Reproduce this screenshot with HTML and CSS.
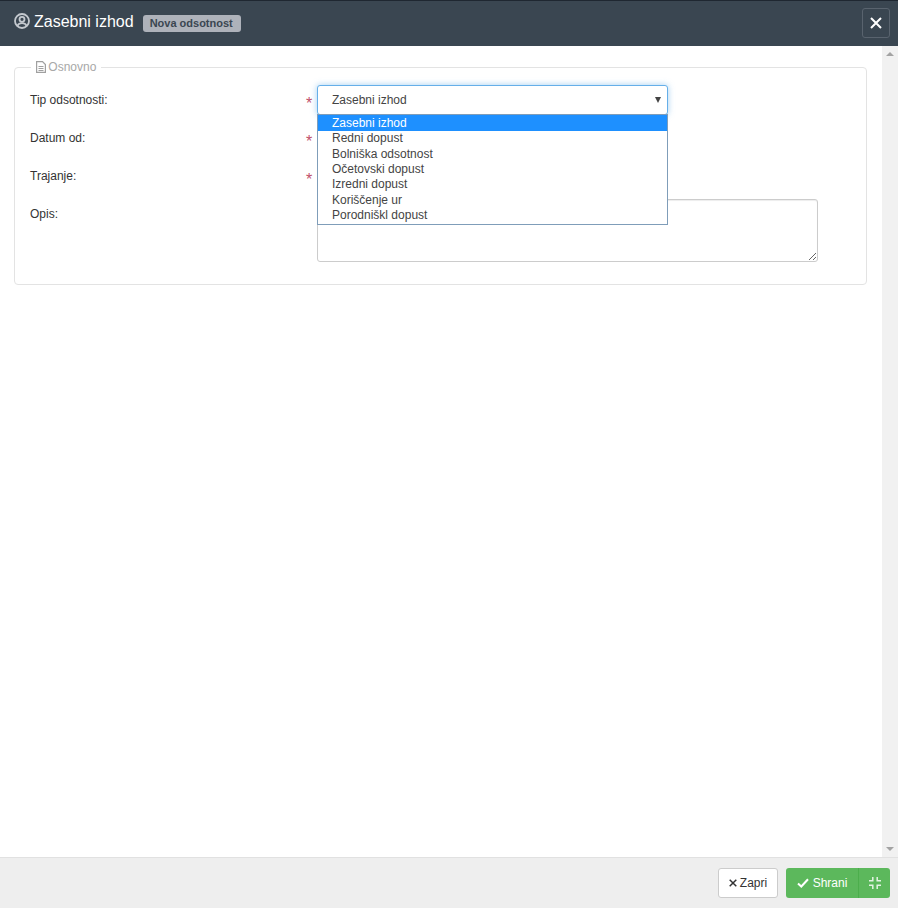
FILE: index.html
```html
<!DOCTYPE html>
<html lang="sl">
<head>
<meta charset="utf-8">
<title>Zasebni izhod</title>
<link rel="stylesheet" href="styles.css">
</head>
<body>
<div class="modal">
  <header class="head">
    <svg class="head-icon" viewBox="0 0 16 16" width="16" height="16" fill="none" stroke="#c4c9cf" stroke-width="1.8"><circle cx="8" cy="8" r="7"/><circle cx="8" cy="6.3" r="2.5"/><path d="M3.4 12.8c1-2 2.600-2.600 4.600-2.600s3.600.6 4.600 2.600"/></svg>
    <h1 class="title">Zasebni izhod</h1>
    <span class="badge">Nova odsotnost</span>
    <button class="close" type="button" aria-label="Zapri">
      <svg viewBox="0 0 12 12" width="12" height="12" stroke="#fff" stroke-width="2" fill="none"><path d="M1 1l10 10M11 1L1 11"/></svg>
    </button>
  </header>
  <div class="middle">
    <main class="content">
      <fieldset class="group">
        <legend class="legend">
          <svg viewBox="0 0 10 12" width="10" height="12" fill="none" stroke="#a0a0a0" stroke-width="1.200"><path d="M.6.600h5.900l2.900 3v7.800H.6zM2.500 5.500h5M2.500 7.500h5M2.500 9.500h5"/></svg>
          Osnovno
        </legend>
        <div class="row">
          <label class="label">Tip odsotnosti:</label>
          <span class="req">*</span>
          <div class="field">
            <div class="select">Zasebni izhod<span class="arrow"></span></div>
            <ul class="options">
              <li class="option active">Zasebni izhod</li>
              <li class="option">Redni dopust</li>
              <li class="option">Bolniška odsotnost</li>
              <li class="option">Očetovski dopust</li>
              <li class="option">Izredni dopust</li>
              <li class="option">Koriščenje ur</li>
              <li class="option">Porodniškl dopust</li>
            </ul>
          </div>
        </div>
        <div class="row">
          <label class="label">Datum od:</label>
          <span class="req">*</span>
          <div class="field"></div>
        </div>
        <div class="row">
          <label class="label">Trajanje:</label>
          <span class="req">*</span>
          <div class="field"></div>
        </div>
        <div class="row row-last">
          <label class="label">Opis:</label>
          <span class="req"></span>
          <textarea class="area"></textarea>
        </div>
      </fieldset>
    </main>
    <div class="scrollbar">
      <span class="sb-up"></span>
      <span class="sb-down"></span>
    </div>
  </div>
  <footer class="foot">
    <button class="btn btn-close" type="button">
      <svg viewBox="0 0 8 8" width="8" height="8" stroke="#333" stroke-width="1.500" fill="none"><path d="M.7.700l6.600 6.600M7.300.700L.7 7.300"/></svg>
      Zapri
    </button>
    <div class="save-group">
      <button class="btn btn-save" type="button">
        <svg viewBox="0 0 12 10" width="12" height="10" stroke="#fff" stroke-width="2" fill="none"><path d="M1 5.500l3.300 3L11 1.200"/></svg>
        Shrani
      </button>
      <button class="btn btn-shrink" type="button" aria-label="Skrči">
        <svg viewBox="0 0 12 12" width="12" height="12" stroke="#e4f3e4" stroke-width="1.500" fill="none"><path d="M3.800 0v3.800H0M8.200 0v3.800H12M3.800 12V8.200H0M8.200 12V8.200H12"/></svg>
      </button>
    </div>
  </footer>
</div>
</body>
</html>
```

FILE: styles.css
```css
* { box-sizing: border-box; }
html, body { margin: 0; height: 100%; }
body {
  font-family: "Liberation Sans", Arial, sans-serif;
  font-size: 12px;
  color: #333;
  background: #fff;
}
.modal { display: flex; flex-direction: column; height: 908px; }

.head {
  flex: none;
  height: 46px;
  display: flex;
  align-items: center;
  padding: 0 8px 2px 14px;
  background: #3a4651;
  border-top: 1px solid #1f2731;
  color: #fff;
}
.head-icon { flex: none; margin: -3px 4px 0 0; }
.title { margin: 0 9px 0 0; font-size: 16px; font-weight: 400; line-height: 20px; position: relative; top: -1px; }
.badge {
  width: 98px;
  height: 17px;
  margin-top: 1px;
  padding: 0 7px;
  border-radius: 3px;
  background: #aeb2ba;
  color: #3a4651;
  font-size: 11px;
  font-weight: 700;
  line-height: 17px;
}
.close {
  margin-left: auto;
  width: 28px;
  height: 30px;
  padding: 0;
  display: flex;
  align-items: center;
  justify-content: center;
  background: transparent;
  border: 1px solid #59636e;
  border-radius: 3px;
}

.middle { flex: 1; display: flex; min-height: 0; }
.content { flex: 1; padding: 14px 15px 0 14px; }
.group {
  margin: 0;
  padding: 11px 15px 0;
  height: 225px;
  border: 1px solid #e3e3e3;
  border-radius: 4px;
}
.legend {
  margin-left: 1px;
  padding: 0 5px;
  color: #a8a8a8;
  font-size: 12px;
  line-height: 14px;
}
.legend svg { vertical-align: -2px; margin-right: -1px; }

.row { display: flex; height: 38px; }
.row-last { height: auto; margin-top: -8px; padding-top: 8px; }
.label { flex: none; width: 274px; padding-top: 8px; line-height: 14px; }
.req {
  flex: none;
  width: 13px;
  padding: 11px 0 0 2px;
  color: #c0506a;
  font-size: 16px;
  line-height: 16px;
}
.field { position: relative; width: 351px; }
.select {
  position: relative;
  height: 30px;
  padding: 0 14px;
  line-height: 29px;
  color: #444;
  background: #fff;
  border: 1px solid #66afe9;
  border-radius: 3px;
  box-shadow: 0 0 6px rgba(102, 175, 233, .6);
}
.arrow {
  position: absolute;
  right: 6px;
  top: 11px;
  border: 3.500px solid transparent;
  border-top: 6px solid #444;
  border-bottom: 0;
}
.options {
  position: absolute;
  z-index: 2;
  left: 0;
  top: 29px;
  width: 351px;
  margin: 0;
  padding: 0;
  list-style: none;
  background: #fff;
  border: 1px solid #7f9db9;
}
.option {
  height: 15.400px;
  padding-left: 14px;
  line-height: 14px;
  color: #444;
}
.option.active { height: 16.300px; line-height: 16px; background: #1e90ff; color: #fff; }
.area {
  display: block;
  width: 501px;
  height: 63px;
  margin: 0;
  border: 1px solid #ccc;
  border-radius: 3px;
  box-shadow: inset 0 1px 1px rgba(0, 0, 0, .075);
  background: #fff;
}

.scrollbar {
  flex: none;
  width: 16px;
  display: flex;
  flex-direction: column;
  justify-content: space-between;
  align-items: center;
  padding: 6px 0;
  background: #f1f1f1;
}
.sb-up { border: 4px solid transparent; border-top: 0; border-bottom: 4px solid #a3a3a3; }
.sb-down { border: 4px solid transparent; border-bottom: 0; border-top: 4px solid #a3a3a3; }

.foot {
  flex: none;
  height: 51px;
  display: flex;
  justify-content: flex-end;
  align-items: center;
  gap: 8px;
  padding: 0 8px 0 0;
  background: #eee;
  border-top: 1px solid #e1e1e1;
}
.btn {
  height: 30px;
  margin: 0;
  font: 12px/1 "Liberation Sans", Arial, sans-serif;
  border-radius: 3px;
  display: flex;
  align-items: center;
  justify-content: center;
  gap: 3px;
}
.btn-close { width: 60px; padding: 0; background: #fff; border: 1px solid #ccc; color: #333; }
.save-group { display: flex; }
.btn-save {
  width: 73px;
  padding: 0;
  gap: 4px;
  background: #5cb85c;
  color: #fff;
  border: 0;
  border-right: 1px solid #4cae4c;
  border-radius: 3px 0 0 3px;
}
.btn-shrink { width: 31px; padding: 0; background: #5cb85c; border: 0; border-radius: 0 3px 3px 0; }
```
